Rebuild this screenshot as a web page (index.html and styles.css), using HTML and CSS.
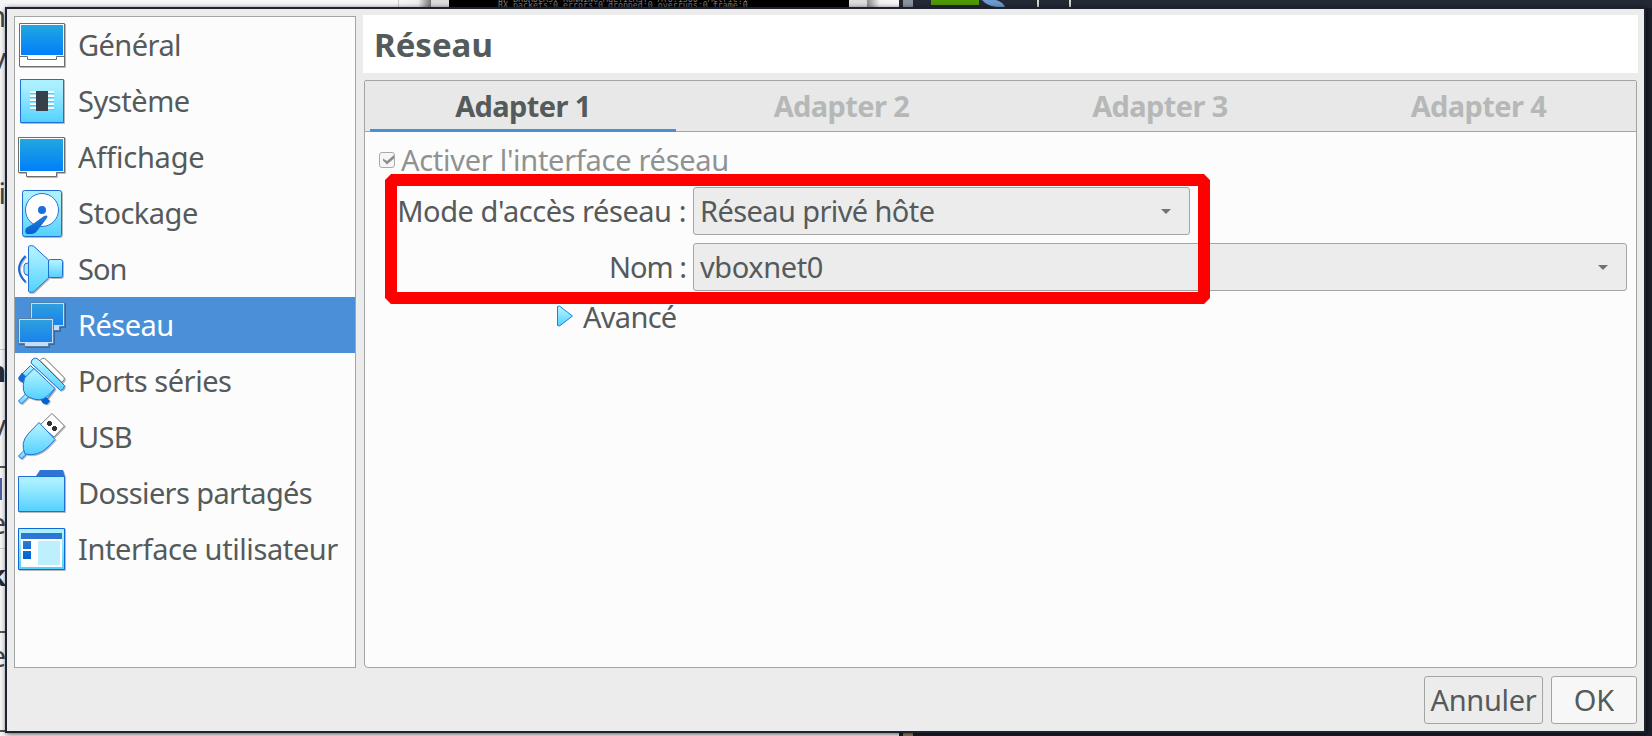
FILE: index.html
```
<!DOCTYPE html>
<html lang="fr"><head><meta charset="utf-8"><title>Réseau</title><link rel="stylesheet" href="styles.css"></head>
<body>
<svg width="0" height="0" class="defs"><defs>
<linearGradient id="scr" x1="0" y1="0" x2="0" y2="1"><stop offset="0" stop-color="#22a7df"/><stop offset="1" stop-color="#007ffb"/></linearGradient>
<linearGradient id="scr2" x1="0" y1="0" x2="0" y2="1"><stop offset="0" stop-color="#2f9fdc"/><stop offset="1" stop-color="#1783ee"/></linearGradient>
<linearGradient id="cy" x1="0" y1="0" x2="0" y2="1"><stop offset=".15" stop-color="#aaf0ff"/><stop offset="1" stop-color="#53d1ff"/></linearGradient>
<linearGradient id="bl" x1="0" y1="0" x2="0" y2="1"><stop offset="0" stop-color="#2e79d4"/><stop offset="1" stop-color="#0062d3"/></linearGradient>
</defs></svg>
<div class="desktop">
  <div class="strip left"></div><div class="strip edge"></div><div class="strip frame"></div><div class="strip term"><pre>UP BROADCAST RUNNING MULTICAST  MTU:1500  Metric:1
RX packets:0 errors:0 dropped:0 overruns:0 frame:0</pre></div><div class="strip frame"></div><div class="strip edge r"></div>
  <svg class="bits" width="753" height="8"><path d="M4 0h10v8H4z" fill="#8b92a1"/><path d="M32 0h48v5H32z" fill="#4e9a06"/><path d="M83 0h14q7 2 9 7h-8q-10-1-15-7z" fill="#6c9bd0"/><path d="M138 0h2v7h-2zM170 0h2v7h-2z" fill="#d3d7cf"/></svg>
</div>
<div class="behind">
<i style="top:349px"></i><i class="dark" style="top:466px"></i><i class="blue" style="top:478px"></i><i style="top:548px"></i><i class="dark" style="top:631px"></i><i class="dark" style="top:730px"></i>
<span style="top:-2px">m</span><span style="top:40px">v</span><span style="top:175px">ti</span><span class="b" style="top:353px">h</span><span style="top:407px">v</span><span style="top:505px">e</span><span class="b" style="top:557px">k</span><span style="top:638px">e</span>
</div>
<div class="dialog">
  <div class="main">
    <nav class="list">
      <div class="item"><svg class="ic" viewBox="0 0 50 50"><g class="sh"><path d="M3.500 4.500h45v43h-45z" fill="#fff" stroke="#6d6d6d"/><path d="M5 6h42v30H5z" fill="url(#scr)"/><path d="M3.500 37.500h8v3h29v-3h8" fill="none" stroke="#6d6d6d"/></g></svg><span class="t t1">Général</span></div>
      <div class="item"><svg class="ic" viewBox="0 0 50 50"><g class="sh"><path d="M4.500 4.500h43v43h-43z" fill="url(#cy)" stroke="#1f6fd6"/><path d="M14 17h24M14 21h24M14 25h24M14 29h24M14 33h24" stroke="#fff" stroke-width="2"/><path d="M14 18.500h24M14 22.500h24M14 26.500h24M14 30.500h24M14 34.500h24" stroke="#78b7d6"/><path d="M20 16h12v20H20z" fill="#373f4b"/></g></svg><span class="t t2">Système</span></div>
      <div class="item"><svg class="ic" viewBox="0 0 50 50"><g class="sh"><path d="M2.500 6.500h46v35h-8v4h-30v-4h-8z" fill="#fff" stroke="#6d6d6d"/><path d="M4 8h43v32H4z" fill="url(#scr)"/></g></svg><span class="t t3">Affichage</span></div>
      <div class="item"><svg class="ic" viewBox="0 0 50 50"><g class="sh"><rect x="6.500" y="3.500" width="39" height="46" rx="2" fill="url(#cy)" stroke="#1f6fd6"/><circle cx="26" cy="23" r="16.500" fill="#fff" stroke="#2773d0"/><circle cx="26" cy="23" r="4" fill="#1a70d8"/><path d="M31 29Q32 28 31 31L21 44q-2 3-5 3h-5q-3-2-1-6l7-4 11-8q3-1 3 0z" fill="url(#bl)"/></g></svg><span class="t t4">Stockage</span></div>
      <div class="item"><svg class="ic" viewBox="0 0 50 50"><g class="sh"><path d="M12 20q-4 0-4 3v6q0 3 4 3" fill="#a0eafc" stroke="#1f6fd6"/><path d="M9.500 13q-13 13 0 26" fill="none" stroke="#1769d2" stroke-width="2"/><rect x="32.500" y="16.500" width="14" height="18" rx="2" fill="url(#cy)" stroke="#1f6fd6"/><path d="M12.500 4q0-2 5-1l15 14v18l-15 14q-5 1-5-1z" fill="url(#cy)" stroke="#1f6fd6"/></g></svg><span class="t t5">Son</span></div>
      <div class="item sel"><svg class="ic" viewBox="0 0 50 50"><g class="sh"><path d="M14.500 3.500h34v24h-5v4h-24v-4h-5z" fill="#c8dcf4" stroke="#557fa9"/><path d="M16 5h31v21H16z" fill="url(#scr2)"/><path d="M2.500 19.500h35v25h-5v3h-24v-3h-6z" fill="#c8dcf4" stroke="#557fa9"/><path d="M4 21h32v22H4z" fill="url(#scr2)"/></g></svg><span class="t t6">Réseau</span></div>
      <div class="item"><svg class="ic" viewBox="0 0 50 50"><g class="sh"><path d="M24 5.500q3-4 6-1l18 18q1.500 2-2 5z" fill="#fff" stroke="#777"/><path d="M14.500 10.500l7 7-10 10-7-7z" fill="url(#cy)" stroke="#1f6fd6"/><path d="M2 23l4-5.500 7 7-5 3.500q-5-1-6-5z" fill="#1769d2"/><path d="M38.500 34.500l-7-1-9 9 6 5z" fill="url(#cy)" stroke="#1f6fd6"/><path d="M25 43l3-3 6 6-3 3.500q-6 0-6-6.500z" fill="#0062d3"/><path d="M2.500 46l8-8 3 3-8 8z" fill="url(#cy)" stroke="#1f6fd6"/><path d="M18 13.500L8.500 23q-4 15 4 19 12 6 19-1l7.500-7.500z" fill="url(#cy)" stroke="#1f6fd6"/><path d="M15 8q0-4 4-5 2 0 4 2l25.500 25.500q0 4-4 5z" fill="url(#cy)" stroke="#1f6fd6"/></g></svg><span class="t t7">Ports séries</span></div>
      <div class="item"><svg class="ic" viewBox="0 0 50 50"><g class="sh"><path d="M24 14L36 2.500 48.500 15 38 26z" fill="#fff" stroke="#777"/><path d="M31 12.500h5M33.500 10v5M36 17.500h5M38.500 15v5" stroke="#333" stroke-width="3"/><path d="M2.500 45l7-7 2 4-6 6z" fill="url(#cy)" stroke="#1f6fd6"/><path d="M23 11.500L39 28.500 32 36Q22 46 9 43q-5-11 3-20z" fill="url(#cy)" stroke="#1f6fd6"/></g></svg><span class="t t8">USB</span></div>
      <div class="item"><svg class="ic" viewBox="0 0 50 50"><g class="sh"><path d="M20 9l4-6h23l2 7z" fill="#2e75d3"/><path d="M2.500 9.500h46v35h-46z" fill="url(#cy)" stroke="#1f6fd6"/></g></svg><span class="t t9">Dossiers partagés</span></div>
      <div class="item"><svg class="ic" viewBox="0 0 50 50"><g class="sh"><path d="M2.500 5.500h46v41h-46z" fill="url(#cy)" stroke="#1268d5"/><path d="M5 16h41v28H5z" fill="#fff"/><path d="M5 10h41v6H5z" fill="#2e76d3"/><path d="M7 18h8v8H7zM7 28h8v8H7z" fill="url(#bl)"/><path d="M22 18h22v24H22z" fill="#bdeffd"/></g></svg><span class="t t10">Interface utilisateur</span></div>
    </nav>
    <section class="content">
      <h1><span class="t">Réseau</span></h1>
      <div class="panel">
        <div class="tabs"><div class="tab on"><span class="t">Adapter 1</span></div><div class="tab"><span class="t">Adapter 2</span></div><div class="tab"><span class="t">Adapter 3</span></div><div class="tab"><span class="t">Adapter 4</span></div></div>
        <div class="check"><svg width="16" height="16" viewBox="0 0 16 16"><rect x=".5" y=".5" width="15" height="15" rx="2.500" fill="#f6f6f6" stroke="#aaa"/><path d="M4 6.500l4 2.500 7-6v3.500l-7 6-4-4z" fill="#8b8e8f"/></svg><span class="t t12">Activer l'interface réseau</span></div>
        <div class="form">
          <label><span class="t t13">Mode d'accès réseau :</span></label><div class="combo short"><span class="t t14">Réseau privé hôte</span><i></i></div>
          <label><span class="t t15">Nom :</span></label><div class="combo"><span class="t t16">vboxnet0</span><i></i></div>
        </div>
        <div class="adv"><svg width="16" height="22" viewBox="0 0 16 22"><path d="M.5 1.500l2-.5 13 10-13 10-2-.5z" fill="url(#cy)" stroke="#1f7fd6"/></svg><span class="t t17">Avancé</span></div>
      </div>
    </section>
  </div>
  <footer><div class="btn cancel"><span class="t t18">Annuler</span></div><div class="btn ok"><span class="t">OK</span></div></footer>
</div>
<svg class="mark" width="825" height="130"><path d="M6 0H819L825 6V124L819 130H6L0 124V6ZM12 12V118H813V12Z" fill="#f00" fill-rule="evenodd"/></svg>
</body></html>
```
FILE: styles.css
```
*{box-sizing:border-box}
body{margin:0;width:1652px;height:736px;overflow:hidden;position:relative;background:linear-gradient(90deg,#f7f7f7 899px,#1c202b 899px,#1c202b 903px,#a08258 903px,#a08258 913px,#1c202b 913px);font-family:"Noto Sans","Open Sans",sans-serif;font-size:29px;line-height:40px;color:#555a5b}
.defs{position:absolute}
.desktop{display:flex;height:8px}
.strip{flex:none;height:8px}
.left{width:399px;background:#f7f7f7;border-right:1px solid #ccc}
.edge{width:32px;background:linear-gradient(90deg,#f7f7f7,#eee 60%,#777 99%)}
.frame{width:18px;background:#dcdcdc}
.term{width:400px;background:#000;overflow:hidden}
.term pre{margin:-4px 0 0 49px;font:8.300px/6px "DejaVu Sans Mono",monospace;color:#777}
.edge.r{width:32px;background:linear-gradient(90deg,#888,#f3f3f3 40%,#f8f8f8)}
.bits{flex:none;background:#242935;height:8px}
.behind{position:absolute;left:0;top:0;width:6px;height:736px;overflow:hidden;background:#f5f5f5}
.behind span{position:absolute;right:0;line-height:36px;color:#444}
.behind .b{font-weight:700;color:#222b38}
.behind i{position:absolute;left:0;width:6px;height:1px;background:#ccc}
.behind .dark{height:2px;background:#555}
.behind .blue{width:2px;height:22px;background:#4a5fa8}
.t{white-space:nowrap;flex:none}
.t1{letter-spacing:-.55px}.t2{letter-spacing:-.45px}.t3{letter-spacing:-.2px}.t4{letter-spacing:-.5px}.t5{letter-spacing:-1px}
.t6{letter-spacing:-.55px}.t7{letter-spacing:-.45px}.t8{letter-spacing:-.7px}.t9{letter-spacing:-.62px}.t10{letter-spacing:-.4px}
.t12{letter-spacing:-.29px}.t13{letter-spacing:-.45px}.t14{letter-spacing:-.6px}.t15{letter-spacing:-1px}.t16{letter-spacing:-.4px}.t17{letter-spacing:-.7px}.t18{letter-spacing:-.3px}
.dialog{position:absolute;left:5px;top:7px;width:1641px;height:726px;border:2px solid #1d2230;background:#ececec;box-shadow:1px 1px 5px #000a;padding:6px 6px 7px 7px;display:flex;flex-direction:column;justify-content:space-between}
.main{display:flex;justify-content:space-between}
.list{width:342px;height:652px;margin-top:1px;border:1px solid #a3a4a4;background:#fcfcfc}
.item{height:56px;display:flex;align-items:center;padding-left:1px}
.ic{width:50px;height:50px;margin:-2px 12px 0 0;flex:none;overflow:visible}
.sh{filter:drop-shadow(1px 1px 0 #0004)}
.item.sel{background:#4a90d9;color:#fff}
.content{width:1275px}
h1{margin:0;height:58px;background:#fff;padding:10px 0 0 11px;font-size:33px;line-height:40px}
.panel{margin:7px 1px 0;height:588px;border:1px solid #a3a4a4;border-radius:2px 2px 4px 4px;background:#fcfcfc}
.tabs{display:flex;height:51px;background:#e8e8e8;border-bottom:1px solid #a3a4a4;padding-left:5px}
.tab{width:306px;margin-right:12.500px;height:51px;text-align:center;font-weight:700;color:#b6b8b8;line-height:49px;letter-spacing:-.6px;flex:none}
.tab.on{color:#555a5b;border-bottom:3px solid #4a90d9}
.check{height:40px;margin-top:8px;padding-left:14px;display:flex;align-items:center;gap:6px;color:#8f9293}
.form{margin-top:7px;display:grid;grid-template-columns:321px 934px;column-gap:7px;row-gap:8px}
label{text-align:right;line-height:48px}
.combo{height:48px;border:1px solid #a3a4a4;border-radius:3px;background:#ececec;display:flex;justify-content:space-between;align-items:center;padding:0 18px 0 6px}
.short{width:497px}
.combo i{border:5px solid transparent;border-top-color:#707374;border-bottom:0}
.adv{display:flex;align-items:center;gap:10px;margin:6px 0 0 192px;height:40px}
.adv svg{margin-top:-2px}
footer{display:flex;justify-content:flex-end;gap:8px;padding-right:1px}
.btn{height:48px;border:1px solid #a3a4a4;border-radius:3px;display:flex;align-items:center;justify-content:center}
.cancel{width:119px}.ok{width:86px;background:#f7f7f7}
.mark{position:absolute;left:385px;top:174px}
```
